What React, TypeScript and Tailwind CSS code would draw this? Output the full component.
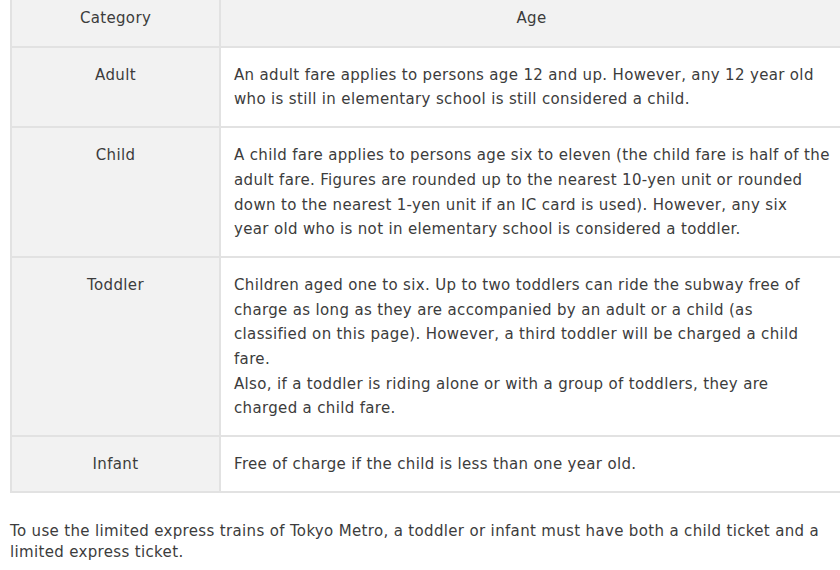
import React from "react";

const rows: { cat: string; lines: string[] }[] = [
  {
    cat: "Adult",
    lines: [
      "An adult fare applies to persons age 12 and up. However, any 12 year old",
      "who is still in elementary school is still considered a child.",
    ],
  },
  {
    cat: "Child",
    lines: [
      "A child fare applies to persons age six to eleven (the child fare is half of the",
      "adult fare. Figures are rounded up to the nearest 10-yen unit or rounded",
      "down to the nearest 1-yen unit if an IC card is used). However, any six",
      "year old who is not in elementary school is considered a toddler.",
    ],
  },
  {
    cat: "Toddler",
    lines: [
      "Children aged one to six. Up to two toddlers can ride the subway free of",
      "charge as long as they are accompanied by an adult or a child (as",
      "classified on this page). However, a third toddler will be charged a child",
      "fare.",
      "Also, if a toddler is riding alone or with a group of toddlers, they are",
      "charged a child fare.",
    ],
  },
  {
    cat: "Infant",
    lines: ["Free of charge if the child is less than one year old."],
  },
];

export default function App() {
  return (
    <div
      className="w-[840px] h-[570px] overflow-hidden bg-white text-[#3c3c3c] text-[15px] leading-[24.7px] tracking-[0.34px]"
      style={{ fontFamily: '"DejaVu Sans", Verdana, sans-serif' }}
    >
      <div className="pl-[10px]">
        <table className="w-[832px] border-collapse border-l-2 border-b-2 border-[#e2e2e2]">
          <thead>
            <tr className="bg-[#f2f2f2]">
              <th className="w-[209px] font-normal text-center pt-[6px] pb-[15px] border-r-2 border-b-2 border-[#e2e2e2]">
                Category
              </th>
              <th className="font-normal text-center pt-[6px] pb-[15px] border-b-2 border-[#e2e2e2]">
                Age
              </th>
            </tr>
          </thead>
          <tbody>
            {rows.map((r) => (
              <tr key={r.cat}>
                <td className="bg-[#f2f2f2] text-center align-top pt-[15px] pb-[14px] border-r-2 border-b-2 border-[#e2e2e2]">
                  {r.cat}
                </td>
                <td className="align-top pt-[15px] pb-[14px] pl-[13px] pr-0 border-b-2 border-[#e2e2e2] whitespace-nowrap">
                  {r.lines.map((l, i) => (
                    <div key={i}>{l}</div>
                  ))}
                </td>
              </tr>
            ))}
          </tbody>
        </table>
        <div className="mt-[28px] leading-[21px] whitespace-nowrap">
          <div>
            To use the limited express trains of Tokyo Metro, a toddler or infant must have both a child ticket and a
          </div>
          <div>limited express ticket.</div>
        </div>
      </div>
    </div>
  );
}
